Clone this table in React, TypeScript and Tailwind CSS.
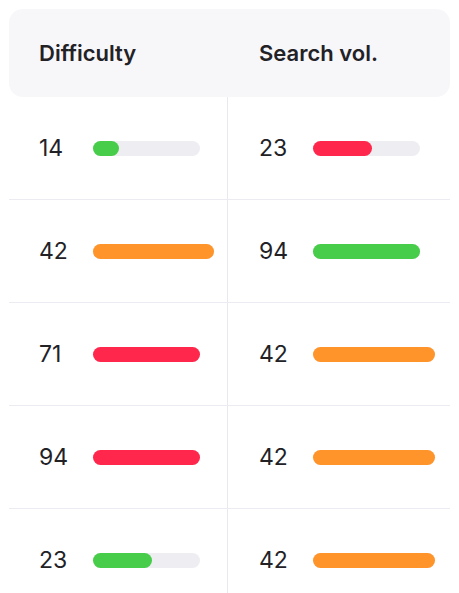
import React from 'react'

type Cell = {
  value: number
  color: string
  fill: number
  track: number
}

const rows: [Cell, Cell][] = [
  [
    { value: 14, color: 'bg-[#48cd4a]', fill: 26, track: 107 },
    { value: 23, color: 'bg-[#ff274b]', fill: 59, track: 107 },
  ],
  [
    { value: 42, color: 'bg-[#ff952a]', fill: 121, track: 121 },
    { value: 94, color: 'bg-[#48cd4a]', fill: 107, track: 107 },
  ],
  [
    { value: 71, color: 'bg-[#ff274b]', fill: 107, track: 107 },
    { value: 42, color: 'bg-[#ff952a]', fill: 122, track: 122 },
  ],
  [
    { value: 94, color: 'bg-[#ff274b]', fill: 107, track: 107 },
    { value: 42, color: 'bg-[#ff952a]', fill: 122, track: 122 },
  ],
  [
    { value: 23, color: 'bg-[#48cd4a]', fill: 59, track: 107 },
    { value: 42, color: 'bg-[#ff952a]', fill: 122, track: 122 },
  ],
]

function Bar({ cell }: { cell: Cell }) {
  return (
    <div className="h-[15px] rounded-full bg-[#eeedf2]" style={{ width: cell.track }}>
      <div className={`h-full rounded-full ${cell.color}`} style={{ width: cell.fill }} />
    </div>
  )
}

function DataCell({ cell, left }: { cell: Cell; left: boolean }) {
  return (
    <div
      className={
        left
          ? 'flex h-[102px] items-center border-r border-[#e9e8ee] pl-[30px]'
          : 'flex h-[102px] items-center pl-[31px]'
      }
    >
      <span className="w-[54px] text-[23px] leading-none text-[#222226]">{cell.value}</span>
      <Bar cell={cell} />
    </div>
  )
}

export default function App() {
  return (
    <div
      className="h-[593px] w-[459px] overflow-hidden bg-white px-[9px] pt-[9px]"
      style={{ fontFamily: 'Inter, "Noto Sans", sans-serif' }}
    >
      <div className="grid h-[88px] grid-cols-[219px_1fr] items-center rounded-[14px] bg-[#f7f6f9] text-[22px] font-semibold text-[#222226]">
        <div className="pl-[30px]">Difficulty</div>
        <div className="pl-[31px]">Search vol.</div>
      </div>
      <div>
        {rows.map((row, i) => (
          <div key={i} className="grid grid-cols-[219px_1fr] border-b border-[#ecebf1]">
            <DataCell cell={row[0]} left />
            <DataCell cell={row[1]} left={false} />
          </div>
        ))}
      </div>
    </div>
  )
}
